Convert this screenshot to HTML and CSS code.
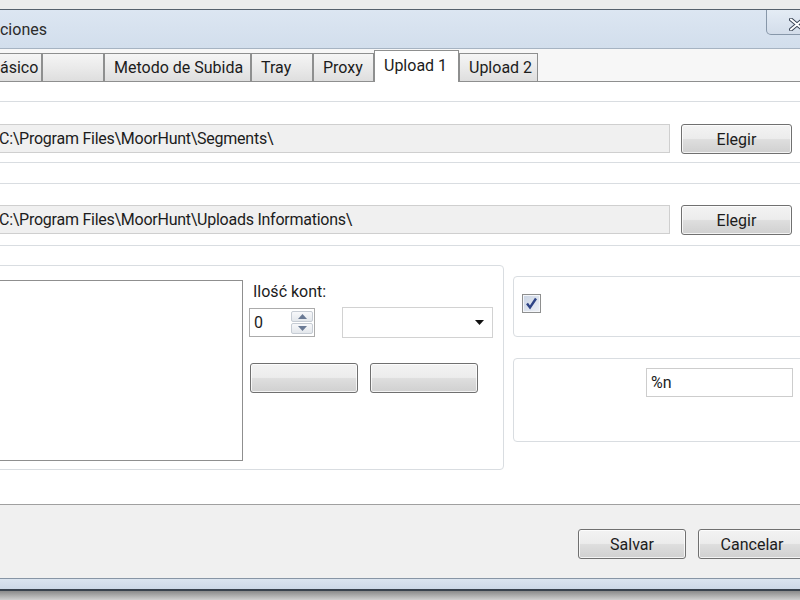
FILE: index.html
```html
<!DOCTYPE html>
<html lang="es">
<head>
    <meta charset="UTF-8">
    <meta name="viewport" content="width=device-width, initial-scale=1.0">
    <title>Opciones</title>
    <link rel="stylesheet" href="styles.css">
</head>
<body>
    <div class="window">
        <div class="titlebar">
            <span class="title">Opciones</span>
            <div class="close-btn">
                <svg width="16" height="13" viewBox="0 0 16 13">
                    <path d="M2 1.5 L14 11.5 M14 1.5 L2 11.5" stroke="#3b4656" stroke-width="4" stroke-linecap="round"/>
                    <path d="M2 1.5 L14 11.5 M14 1.5 L2 11.5" stroke="#ffffff" stroke-width="2" stroke-linecap="round"/>
                </svg>
            </div>
        </div>

        <div class="tabstrip">
            <div class="tab tab-basic">Básico</div>
            <div class="tab tab-blank"></div>
            <div class="tab tab-metodo">Metodo de Subida</div>
            <div class="tab tab-tray">Tray</div>
            <div class="tab tab-proxy">Proxy</div>
            <div class="tab tab-up1 active">Upload 1</div>
            <div class="tab tab-up2">Upload 2</div>
        </div>

        <div class="page">
            <div class="group group-path">
                <div class="path-box">C:\Program Files\MoorHunt\Segments\</div>
                <button class="btn btn-elegir">Elegir</button>
            </div>

            <div class="group group-path group-path2">
                <div class="path-box">C:\Program Files\MoorHunt\Uploads Informations\</div>
                <button class="btn btn-elegir">Elegir</button>
            </div>

            <div class="accounts-row">
                <div class="group group-accounts">
                    <div class="listbox"></div>
                    <div class="accounts-side">
                        <div class="label">Ilość kont:</div>
                        <div class="count-row">
                            <div class="spin">
                                <span class="spin-value">0</span>
                                <div class="spin-arrows">
                                    <span class="spin-btn">
                                        <svg width="9" height="5" viewBox="0 0 9 5"><path d="M0 5 L4.5 0 L9 5 Z" fill="#6a7a95"/></svg>
                                    </span>
                                    <span class="spin-btn">
                                        <svg width="9" height="5" viewBox="0 0 9 5"><path d="M0 0 L4.5 5 L9 0 Z" fill="#6a7a95"/></svg>
                                    </span>
                                </div>
                            </div>
                            <div class="combo">
                                <svg width="9" height="5" viewBox="0 0 9 5"><path d="M0 0 L4.5 5 L9 0 Z" fill="#111"/></svg>
                            </div>
                        </div>
                        <div class="btn-row">
                            <button class="btn"></button>
                            <button class="btn"></button>
                        </div>
                    </div>
                </div>

                <div class="side-groups">
                    <div class="group group-check">
                        <span class="checkbox">
                            <svg width="13" height="13" viewBox="0 0 13 13"><path d="M2 6.5 L5 10.5 L11 1.5" fill="none" stroke="#2f4486" stroke-width="2.4"/></svg>
                        </span>
                    </div>
                    <div class="group group-format">
                        <div class="text-box">%n</div>
                    </div>
                </div>
            </div>
        </div>

        <div class="footer">
            <button class="btn">Salvar</button>
            <button class="btn">Cancelar</button>
        </div>
        <div class="frame-bottom"></div>
        <div class="frame-shadow"></div>
    </div>
</body>
</html>
```

FILE: styles.css
```css
body {
    margin: 0;
    overflow: hidden;
    background: #ececec;
    font-family: Roboto, "Liberation Sans", sans-serif;
    font-size: 16px;
    color: #1c1c1c;
}
.window {
    width: 860px;
    margin: 9px 0 0 -24px;
    border-top: 1px solid #56606c;
}
.titlebar {
    height: 39px;
    box-sizing: border-box;
    display: flex;
    justify-content: space-between;
    align-items: flex-start;
    padding: 0 25px 0 4px;
    background: linear-gradient(#dce6f2, #d2deec);
    border-bottom: 1px solid #a6b3c2;
}
.title {
    align-self: center;
    color: #2b2b2b;
}
.close-btn {
    width: 45px;
    height: 25px;
    box-sizing: border-box;
    border: 1px solid #8797a9;
    border-top: none;
    border-radius: 0 0 5px 5px;
    background: linear-gradient(#e4ecf5, #d3ddea);
    padding: 6px 0 0 22px;
}
.tabstrip {
    height: 32px;
    display: flex;
    align-items: flex-end;
    padding-left: 4px;
    background: #f7f7f7;
}
.tab {
    box-sizing: border-box;
    height: 28px;
    padding: 4px 0 0 9px;
    border: 1px solid #8e8f8f;
    border-bottom: none;
    background: linear-gradient(#f5f5f5, #e9e9e9 55%, #dedede);
    white-space: nowrap;
    overflow: hidden;
    line-height: 20px;
}
.tab.active {
    position: relative;
    height: 32px;
    margin-bottom: -1px;
    padding-top: 5px;
    background: #fff;
}
.tab-basic { width: 62px; }
.tab-blank { width: 62px; }
.tab-metodo { width: 147px; }
.tab-tray { width: 62px; }
.tab-proxy { width: 61px; }
.tab-up1 { width: 85px; }
.tab-up2 { width: 79px; }

.page {
    height: 424px;
    box-sizing: border-box;
    background: #fff;
    border-top: 1px solid #8e8f8f;
    border-bottom: 1px solid #a0a0a0;
    padding: 19px 26px 0 10px;
}
.group {
    box-sizing: border-box;
    border: 1px solid #d9dde1;
    border-radius: 4px;
}
.group-path {
    height: 62px;
    padding: 22px 0 0 7px;
    display: flex;
    align-items: flex-start;
    gap: 11px;
}
.group-path2 {
    height: 63px;
    margin-top: 20px;
    padding-top: 21px;
}
.path-box {
    box-sizing: border-box;
    width: 676px;
    height: 29px;
    border: 1px solid #cfcfcf;
    background: #f0f0f0;
    padding: 3px 0 0 4px;
    line-height: 21px;
    letter-spacing: -0.25px;
    white-space: nowrap;
}
.btn {
    box-sizing: border-box;
    width: 108px;
    height: 30px;
    padding: 0;
    border: 1px solid #707070;
    border-radius: 3px;
    background: linear-gradient(#f3f3f3 0%, #ececec 48%, #dedede 52%, #d0d0d0 100%);
    box-shadow: inset 0 0 0 1px rgba(255, 255, 255, 0.75);
    font: inherit;
    color: #1c1c1c;
}
.btn-elegir {
    width: 111px;
}

.accounts-row {
    display: flex;
    align-items: flex-start;
    gap: 9px;
    margin-top: 19px;
}
.group-accounts {
    width: 518px;
    height: 205px;
    padding: 14px 0 0 7px;
    display: flex;
    align-items: flex-start;
    gap: 6px;
}
.listbox {
    box-sizing: border-box;
    width: 249px;
    height: 181px;
    border: 1px solid #8f8f8f;
    background: #fff;
}
.label {
    margin-top: 2px;
    padding-left: 4px;
    line-height: 20px;
}
.count-row {
    display: flex;
    align-items: center;
    gap: 27px;
    margin-top: 5px;
}
.spin {
    box-sizing: border-box;
    width: 66px;
    height: 29px;
    border: 1px solid #ababab;
    display: flex;
    justify-content: space-between;
    align-items: flex-start;
    padding: 1px 1px 0 4px;
    line-height: 25px;
}
.spin-arrows {
    display: flex;
    flex-direction: column;
    gap: 1px;
    margin-top: 1px;
}
.spin-btn {
    box-sizing: border-box;
    width: 22px;
    height: 11px;
    border: 1px solid #c6ccd4;
    border-radius: 2px;
    background: linear-gradient(#f7f8fa, #e3e7ec);
    display: flex;
    align-items: center;
    justify-content: center;
}
.combo {
    box-sizing: border-box;
    width: 151px;
    height: 31px;
    border: 1px solid #d2d2d2;
    background: #fff;
    display: flex;
    justify-content: flex-end;
    align-items: center;
    padding-right: 8px;
}
.btn-row {
    display: flex;
    gap: 12px;
    margin-top: 25px;
    padding-left: 1px;
}

.side-groups {
    display: flex;
    flex-direction: column;
    gap: 21px;
    padding-top: 11px;
}
.group-check {
    width: 297px;
    height: 61px;
    padding: 17px 0 0 8px;
}
.checkbox {
    box-sizing: border-box;
    width: 19px;
    height: 19px;
    border: 1px solid #8e8f8f;
    background: linear-gradient(135deg, #c9d3e3, #eef1f6);
    box-shadow: inset 0 0 0 1px #f4f6fa;
    display: flex;
    align-items: center;
    justify-content: center;
}
.group-format {
    width: 297px;
    height: 84px;
    padding: 9px 0 0 132px;
}
.text-box {
    box-sizing: border-box;
    width: 147px;
    height: 29px;
    border: 1px solid #cdcdcd;
    background: #fff;
    padding: 3px 0 0 4px;
    line-height: 21px;
}

.footer {
    height: 73px;
    box-sizing: border-box;
    background: #f0f0f0;
    display: flex;
    justify-content: flex-end;
    align-items: flex-start;
    gap: 12px;
    padding: 24px 30px 0 0;
}
.frame-bottom {
    height: 10px;
    border-top: 1px solid #8795a5;
    border-bottom: 2px solid #39424d;
    background: linear-gradient(#dbe4ef, #cdd8e6);
}
.frame-shadow {
    height: 12px;
    background: linear-gradient(#8a8a8a, #e6e6e6);
}
```
